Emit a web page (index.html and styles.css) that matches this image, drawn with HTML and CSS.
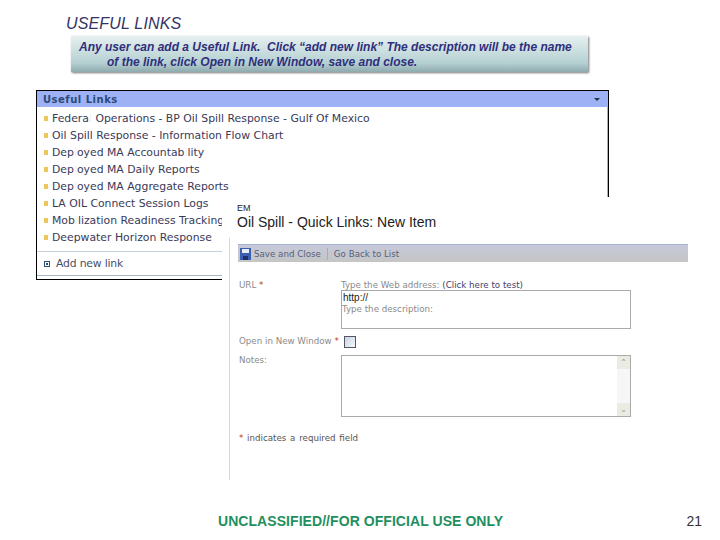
FILE: index.html
```html
<!DOCTYPE html>
<html lang="en">
<head>
    <meta charset="UTF-8">
    <meta name="viewport" content="width=device-width, initial-scale=1.0">
    <title>Useful Links</title>
    <link rel="stylesheet" href="styles.css">
</head>
<body>
    <div class="slide">
        <h1 class="slide-title">USEFUL LINKS</h1>
        <div class="callout">
            <p>Any user can add a Useful Link.&nbsp; Click “add new link” The description will be the name</p>
            <p class="callout-indent">of the link, click Open in New Window, save and close.</p>
        </div>

        <!-- screenshot of the web part -->
        <div class="links-panel">
            <div class="links-header">
                <span>Useful Links</span>
                <span class="arrow"></span>
            </div>
            <ul class="links-list">
                <li>Federa<span class="lost">l</span> Operations - BP Oil Spill Response - Gulf Of Mexico</li>
                <li>Oil Spill Response - Information Flow Chart</li>
                <li>Dep<span class="lost">l</span>oyed MA Accountab<span class="lost">i</span>lity</li>
                <li>Dep<span class="lost">l</span>oyed MA Daily Reports</li>
                <li>Dep<span class="lost">l</span>oyed MA Aggregate Reports</li>
                <li>LA OIL Connect Session Logs</li>
                <li>Mob<span class="lost">i</span>lization Readiness Tracking</li>
                <li>Deepwater Horizon Response</li>
            </ul>
            <div class="add-link">
                <span class="add-icon"></span>
                <span>Add new link</span>
            </div>
        </div>

        <!-- screenshot of the new item form, sits over the web part -->
        <div class="form-shot">
            <div class="form-site">EM</div>
            <div class="form-title">Oil Spill - Quick Links: New Item</div>
            <div class="form-body">
                <div class="toolbar">
                    <svg class="save-icon" width="11" height="12" viewBox="0 0 11 12">
                        <rect width="11" height="12" fill="#3b5fb0"/>
                        <rect x="2" y="1" width="7" height="4" fill="#e8eef8"/>
                        <rect x="3" y="8" width="5" height="4" fill="#1e2f66"/>
                    </svg>
                    <span>Save and Close</span>
                    <span class="toolbar-sep"></span>
                    <span>Go Back to List</span>
                </div>
                <div class="form-grid">
                    <div class="field-label">URL <span class="req">*</span></div>
                    <div class="url-field">
                        <div class="hint">Type the Web address: <span class="test-link">(Click here to test)</span></div>
                        <div class="text-box url-box">http://</div>
                        <div class="hint">Type the description:</div>
                        <div class="text-box desc-box"></div>
                    </div>
                    <div class="field-label window-label">Open in New Window <span class="req">*</span></div>
                    <div class="check-cell"><span class="checkbox"></span></div>
                    <div class="field-label notes-label">Notes:</div>
                    <div class="notes-box">
                        <div class="scrollbar">
                            <span class="scroll-btn">&#8963;</span>
                            <span class="scroll-btn">&#8964;</span>
                        </div>
                    </div>
                </div>
                <div class="req-note"><span class="req">*</span> indicates a required field</div>
            </div>
        </div>

        <div class="slide-footer">
            <span class="marking">UNCLASSIFIED//FOR OFFICIAL USE ONLY</span>
            <span class="page-num">21</span>
        </div>
    </div>
</body>
</html>
```

FILE: styles.css
```css
* {
    margin: 0;
    padding: 0;
    box-sizing: border-box;
}

body {
    background: #fff;
    font-family: "Liberation Sans", Arial, sans-serif;
}

.slide {
    position: relative;
    width: 720px;
    height: 540px;
    overflow: hidden;
}

.slide-title {
    position: absolute;
    left: 66px;
    top: 15px;
    font-size: 16px;
    line-height: 18px;
    font-weight: normal;
    font-style: italic;
    letter-spacing: 0.15px;
    color: #333366;
}

.callout {
    position: absolute;
    left: 71px;
    top: 36px;
    width: 517px;
    height: 36px;
    padding: 4px 0 0 8px;
    background: linear-gradient(#e6f0f0, #b5d0d2 75%, #8fabae);
    box-shadow: 1px 1px 2px #777;
    font-size: 12px;
    line-height: 15px;
    font-weight: bold;
    font-style: italic;
    color: #2f2f7c;
    white-space: nowrap;
}

.callout-indent {
    padding-left: 28px;
}

.links-panel {
    position: absolute;
    left: 36px;
    top: 90px;
    width: 573px;
    height: 190px;
    border: 1px solid #000;
    background: #fff;
    font-family: "DejaVu Sans", Verdana, sans-serif;
    font-size: 10.85px;
    color: #3a3a58;
}

.links-header {
    display: flex;
    justify-content: space-between;
    align-items: center;
    height: 16px;
    padding: 0 8px 0 6px;
    background: #9db1f4;
    font-size: 10px;
    font-weight: bold;
    color: #2b4a78;
    letter-spacing: 0.5px;
}

.arrow {
    width: 0;
    height: 0;
    border-left: 3px solid transparent;
    border-right: 3px solid transparent;
    border-top: 3px solid #234;
}

.links-list {
    list-style: none;
    padding-top: 3px;
    border-right: 1px solid #9db1c8;
    height: 144px;
}

.links-list li {
    display: flex;
    align-items: center;
    height: 17px;
    padding-left: 7px;
    white-space: pre;
}

.links-list li::before {
    content: "";
    width: 4px;
    height: 5px;
    margin-right: 4px;
    background: #edc65c;
}

.lost {
    color: #f0f0f4;
}

.add-link {
    display: flex;
    align-items: center;
    gap: 6px;
    height: 25px;
    padding-left: 7px;
    border-top: 1px solid #c5d0da;
    border-bottom: 1px solid #a8b8c8;
    color: #4a5068;
    letter-spacing: -0.2px;
}

.add-icon {
    width: 6px;
    height: 6px;
    border: 1px solid #2b4a78;
    background: radial-gradient(#2b4a78 30%, #fff 35%);
}

.form-shot {
    position: absolute;
    left: 222px;
    top: 197px;
    width: 466px;
    height: 286px;
    background: #fff;
}

.form-site {
    padding: 6px 0 0 15px;
    font-size: 9px;
    line-height: 10px;
    color: #222;
}

.form-title {
    padding-left: 15px;
    font-size: 14px;
    line-height: 18px;
    color: #222;
}

.form-body {
    height: 242px;
    margin: 7px 0 0 7px;
    padding-top: 6px;
    border-left: 1px solid #d8d8d8;
    font-family: "DejaVu Sans", Verdana, sans-serif;
    font-size: 8.7px;
    color: #8a8a8a;
}

.toolbar {
    display: flex;
    align-items: center;
    gap: 3px;
    height: 18px;
    margin-left: 8px;
    padding-left: 2px;
    border-top: 1px solid #a9b2d0;
    background: linear-gradient(#c6c9da, #c5c5c5);
    color: #55607a;
}

.toolbar-sep {
    width: 1px;
    height: 12px;
    margin: 0 3px;
    background: #aab;
}

.form-grid {
    display: grid;
    grid-template-columns: 102px 290px;
    margin: 18px 0 0 9px;
}

.req {
    color: #b33;
}

.hint {
    height: 10px;
    line-height: 10px;
    white-space: nowrap;
}

.test-link {
    color: #44406c;
}

.text-box {
    border: 1px solid #aaa;
    font-family: "Liberation Sans", Arial, sans-serif;
    font-size: 10px;
    color: #222;
    padding-left: 1px;
}

.url-box {
    height: 14px;
    border-bottom: none;
    line-height: 13px;
}

.desc-box {
    height: 16px;
    border-top: none;
}

.url-field .hint:nth-child(3) {
    height: 9px;
    border-left: 1px solid #aaa;
    border-right: 1px solid #aaa;
}

.window-label {
    margin-top: 7px;
    white-space: nowrap;
}

.check-cell {
    padding: 7px 0 0 3px;
}

.checkbox {
    display: block;
    width: 12px;
    height: 12px;
    border: 1px solid #556;
    background: linear-gradient(135deg, #c8d4e4, #f4f6fa);
}

.notes-label {
    margin-top: 7px;
}

.notes-box {
    position: relative;
    height: 62px;
    margin-top: 7px;
    border: 1px solid #aaa;
}

.scrollbar {
    position: absolute;
    top: 0;
    right: 0;
    width: 13px;
    height: 100%;
    display: flex;
    flex-direction: column;
    justify-content: space-between;
    background: #f5f6f8;
}

.scroll-btn {
    height: 13px;
    background: #e8ece2;
    font-size: 8px;
    line-height: 13px;
    text-align: center;
    color: #999;
}

.req-note {
    margin: 16px 0 0 9px;
    word-spacing: 1px;
    color: #555;
}

.slide-footer {
    position: absolute;
    left: 218px;
    top: 513px;
    width: 484px;
    display: flex;
    justify-content: space-between;
    align-items: center;
    font-size: 14px;
    line-height: 16px;
}

.marking {
    font-weight: bold;
    letter-spacing: 0.06px;
    color: #1f8f5f;
}

.page-num {
    color: #333;
}
```
